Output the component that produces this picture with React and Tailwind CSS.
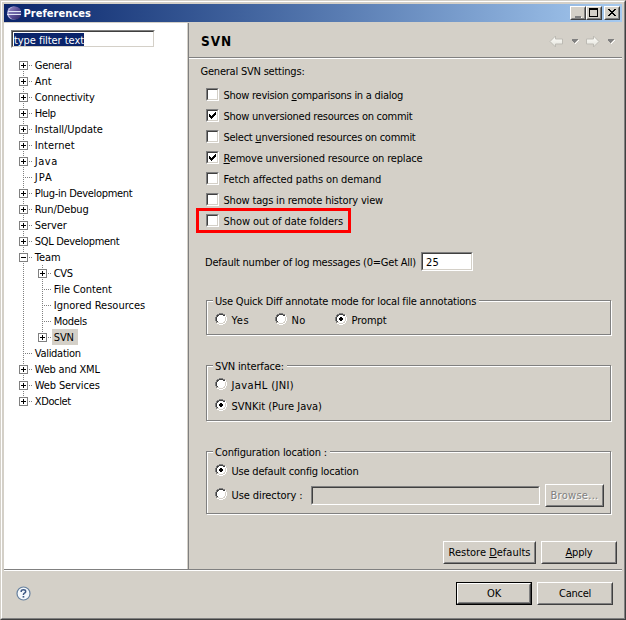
import { useLayoutEffect, useRef } from "react";

/* Text run whose letter spacing is adjusted so that it fills `w` pixels. */
function Label({ w, className = "", children }) {
  const ref = useRef(null);
  useLayoutEffect(() => {
    const el = ref.current;
    el.style.letterSpacing = "0px";
    const natural = el.getBoundingClientRect().width;
    el.style.letterSpacing = (w - natural) / el.textContent.length + "px";
  }, [w]);
  return (
    <span ref={ref} className={"-mb-px inline-block shrink-0 self-start whitespace-pre pt-px leading-4 " + className}>
      {children}
    </span>
  );
}

/* Underlined mnemonic letter */
function Key({ children }) {
  return <span className="underline decoration-1 underline-offset-1">{children}</span>;
}

const tree = [
  ["General", 37, "+"], ["Ant", 17, "+"], ["Connectivity", 60, "+"], ["Help", 21, "+"],
  ["Install/Update", 68, "+"], ["Internet", 40, "+"], ["Java", 23, "+"], ["JPA", 18, ""],
  ["Plug-in Development", 97.5, "+"], ["Run/Debug", 54, "+"], ["Server", 32, "+"],
  ["SQL Development", 84.5, "+"], ["Team", 26, "-"],
  ["CVS", 19, "+", 1], ["File Content", 58, "", 1], ["Ignored Resources", 91.5, "", 1],
  ["Models", 33, "", 1], ["SVN", 20, "+", 1, true],
  ["Validation", 46, ""], ["Web and XML", 65, "+"], ["Web Services", 65, "+"], ["XDoclet", 36, "+"],
];

function Dots({ d }) {
  return <path d={d} stroke="#808080" strokeDasharray="1 1" fill="none" />;
}

function Branch({ mark, first, last }) {
  return (
    <svg width="16" height="16" className="shrink-0" shapeRendering="crispEdges">
      {!first && <Dots d="M5.5 0V8" />}
      {!last && <Dots d="M5.5 8V16" />}
      <Dots d="M7 8.5H14" />
      {mark && (
        <>
          <rect x="1.5" y="4.5" width="8" height="8" fill="#fff" stroke="#808080" />
          <path d={mark === "+" ? "M3 8.5H8M5.5 6V11" : "M3 8.5H8"} stroke="#000" />
        </>
      )}
    </svg>
  );
}

function TreeRow({ item, index }) {
  const [text, w, mark, level, selected] = item;
  return (
    <div className="flex h-4 pl-[14px]">
      {level && (
        <svg width="19" height="16" className="shrink-0" shapeRendering="crispEdges">
          <Dots d="M5.5 0V16" />
        </svg>
      )}
      <Branch mark={mark} first={index === 0} last={index === tree.length - 1 || selected} />
      <span className={selected ? "-ml-px flex bg-[#d4d0c8] pl-[1.75px] pr-[4.25px]" : "flex pl-[0.75px]"}>
        <Label w={w}>{text}</Label>
      </span>
    </div>
  );
}

const sunken =
  "border border-t-[#808080] border-l-[#808080] border-r-white border-b-white";
const sunkenInner =
  "border border-t-[#404040] border-l-[#404040] border-r-[#d4d0c8] border-b-[#d4d0c8]";

function Field({ className, inner = "bg-white", children }) {
  return (
    <div className={"shrink-0 " + sunken + " " + className}>
      <div className={"flex h-full w-full " + sunkenInner + " " + inner}>{children}</div>
    </div>
  );
}

function Check({ w, on, children }) {
  return (
    <div className="flex h-[21px] items-start">
      <Field className="mt-px h-[13px] w-[13px]">
        {on && (
          <svg width="9" height="9" shapeRendering="crispEdges">
            <path
              fill="#000"
              d="M1 3h1v3h-1zM2 4h1v3h-1zM3 5h1v3h-1zM4 4h1v3h-1zM5 3h1v3h-1zM6 2h1v3h-1zM7 1h1v3h-1z"
            />
          </svg>
        )}
      </Field>
      <Label w={w} className="ml-[4.5px]">{children}</Label>
    </div>
  );
}

function Radio({ w, on, className = "", children }) {
  return (
    <div className={"flex items-start " + className}>
      <svg width="12" height="12" className="mt-px shrink-0" shapeRendering="crispEdges">
        <path fill="#fff" d="M4 1h4v1h2v2h1v4h-1v2h-2v1h-4v-1h-2v-2h-1v-4h1v-2h2z" />
        <path fill="#808080" d="M4 0h4v1h-4zM2 1h2v1h-2zM8 1h2v1h-2zM1 2h1v2h-1zM0 4h1v4h-1zM1 8h1v2h-1z" />
        <path fill="#404040" d="M4 1h4v1h-4zM2 2h2v1h-2zM8 2h2v1h-2zM2 3h1v1h-1zM1 4h1v4h-1zM2 8h1v1h-1z" />
        <path fill="#d4d0c8" d="M10 4h1v4h-1zM9 8h1v1h-1zM8 9h2v1h-2zM4 10h4v1h-4zM2 9h2v1h-2z" />
        <path fill="#fff" d="M10 2h1v2h-1zM11 4h1v4h-1zM10 8h1v2h-1zM8 10h2v1h-2zM4 11h4v1h-4zM2 10h2v1h-2z" />
        {on && <path fill="#000" d="M5 4h2v1h1v2h-1v1h-2v-1h-1v-2h1z" />}
      </svg>
      <Label w={w} className="ml-[4.5px]">{children}</Label>
    </div>
  );
}

function Group({ title, w, className, children }) {
  return (
    <fieldset
      className={
        "relative ml-[17px] w-[405px] border border-[#808080] shadow-[inset_1px_1px_0_#fff,1px_1px_0_#fff] " +
        className
      }
    >
      <div className="absolute -top-[8px] left-[6px] flex bg-[#d4d0c8] pl-[2px] pr-[3px]">
        <Label w={w}>{title}</Label>
      </div>
      {children}
    </fieldset>
  );
}

function Button({ className, primary, disabled, w, children }) {
  return (
    <button
      className={
        "flex h-[23px] shrink-0 " + (primary ? "border border-black " : "") + className
      }
    >
      <span className="flex h-full w-full border border-t-white border-l-white border-r-[#404040] border-b-[#404040]">
        <span
          className={
            "flex h-full w-full items-start justify-center border border-transparent border-r-[#808080] border-b-[#808080] " +
            (disabled ? "text-[#808080] [text-shadow:1px_1px_0_#fff]" : "")
          }
        >
          <Label w={w} className={primary ? "" : "mt-px"}>{children}</Label>
        </span>
      </span>
    </button>
  );
}

function CaptionButton({ className = "", children }) {
  return (
    <span
      className={
        "flex h-[14px] w-4 border border-t-white border-l-white border-r-[#404040] border-b-[#404040] " +
        className
      }
    >
      <span className="flex h-full w-full border border-[#d4d0c8] border-r-[#808080] border-b-[#808080] bg-[#d4d0c8]">
        <svg width="12" height="10" shapeRendering="crispEdges">{children}</svg>
      </span>
    </span>
  );
}

function Arrow({ flip }) {
  return (
    <svg width="15" height="13" viewBox="0 0 15 13" className={flip ? "-scale-x-100" : ""}>
      <defs>
        <linearGradient id="arrowFill" x1="0" y1="0" x2="0" y2="1">
          <stop offset="0" stopColor="#fffffb" />
          <stop offset="1" stopColor="#e2e1da" />
        </linearGradient>
      </defs>
      <path d="M1 6.5L6.5 1V4H13.5V9H6.5V12Z" fill="url(#arrowFill)" stroke="#bdbbb4" />
    </svg>
  );
}

function Caret() {
  return (
    <svg width="7" height="5" shapeRendering="crispEdges">
      <path d="M5 1h1v1h-1v1h-1v1h-1v1h1v-1h1v-1h1v-1h1v-1z" fill="#fff" />
      <path d="M0 0h6v1h-1v1h-1v1h-1v1h-1v-1h-1v-1h-1z" fill="#808080" />
    </svg>
  );
}

function EclipseIcon() {
  return (
    <svg width="15" height="15" viewBox="0 0 15 15" className="shrink-0">
      <defs>
        <linearGradient id="globe" x1="0" y1="0" x2="1" y2="1">
          <stop offset="0" stopColor="#9a8fc4" />
          <stop offset="0.5" stopColor="#5b4f97" />
          <stop offset="1" stopColor="#2c2564" />
        </linearGradient>
      </defs>
      <ellipse cx="6.3" cy="7" rx="6.2" ry="6.6" fill="#b9b3e0" />
      <ellipse cx="8" cy="7" rx="6.4" ry="6.6" fill="url(#globe)" />
      <path d="M1 5.5H14M0 8.5H14" stroke="#dfe5f5" />
      <path d="M2 7H14" stroke="#7f7cb5" />
    </svg>
  );
}

export default function App() {
  return (
    <div className="h-[620px] w-[626px] overflow-hidden border border-t-[#d4d0c8] border-l-[#d4d0c8] border-r-[#404040] border-b-[#404040] bg-[#d4d0c8] font-['DejaVu_Sans_Condensed','DejaVu_Sans',sans-serif] text-[11px] text-black">
      <div className="flex h-full w-full flex-col border border-t-white border-l-white border-r-[#808080] border-b-[#808080] p-[2px]">
        <header className="flex h-[18px] shrink-0 items-center bg-linear-to-r from-[#0a246a] to-[#a6caf0] pl-[3px] pr-[2px]">
          <EclipseIcon />
          <Label w={67.5} className="ml-[1.5px] mt-px font-bold text-white">Preferences</Label>
          <CaptionButton className="ml-auto">
            <path d="M3 8h6v2h-6z" fill="#808080" />
            <path d="M3 9h6v1h1v-1h-1z" fill="#fff" />
          </CaptionButton>
          <CaptionButton>
            <path d="M1 0h9v9h-9zM2 2v6h7v-6z" fill="#000" fillRule="evenodd" />
          </CaptionButton>
          <CaptionButton className="ml-[2px]">
            <path
              d="M2 1h2v1h1v1h2v-1h1v-1h2v1h-1v1h-1v1h-1v1h1v1h1v1h1v1h-2v-1h-1v-1h-2v1h-1v1h-2v-1h1v-1h1v-1h1v-1h-1v-1h-1v-1h-1z"
              fill="#000"
            />
          </CaptionButton>
        </header>

        <div className="mt-px flex h-[546px] shrink-0">
          <nav className="w-[183px] shrink-0 bg-white">
            <div className="pl-[7px] pt-[7px]">
              <Field className="h-[18px] w-[144px]">
                <span className="ml-px mt-px flex h-[13px] bg-[#0a246a] text-white">
                  <Label w={70} className="-mt-px">type filter text</Label>
                </span>
              </Field>
            </div>
            <div className="pt-[9px]">
              {tree.map((item, i) => (
                <TreeRow key={item[0]} item={item} index={i} />
              ))}
            </div>
          </nav>
          <div className="ml-px w-px bg-[#808080]" />

          <main className="flex min-w-0 flex-1 flex-col">
            <div className="flex h-[35px] shrink-0 items-center border-b border-[#808080] shadow-[0_1px_0_#fff]">
              <Label w={31} className="ml-3 mt-[9px] text-[13.5px] font-bold">SVN</Label>
              <div className="ml-auto mr-[7px] flex items-center pt-[2px]">
                <Arrow />
                <span className="ml-2 mr-1.5"><Caret /></span>
                <Arrow flip />
                <span className="ml-2"><Caret /></span>
              </div>
            </div>

            <Label w={104} className="ml-[11.5px] mt-[5px]">General SVN settings:</Label>

            <section className="mt-[8px] pl-[17px]">
              <Check w={179.5}>Show revision <Key>c</Key>omparisons in a dialog</Check>
              <Check w={189} on>Show unversioned resources on commit</Check>
              <Check w={192}>Select <Key>u</Key>nversioned resources on commit</Check>
              <Check w={199} on><Key>R</Key>emove unversioned resource on replace</Check>
              <Check w={157.5}>Fetch affected paths on demand</Check>
              <Check w={159.5}>Show tags in remote history view</Check>
              <div className="-ml-[10px] -mt-[5px] h-[25px] w-[155px] border-[3px] border-[#f00] pl-[7px] pt-[2px]">
                <Check w={119.5}>Show out of date folders</Check>
              </div>
            </section>

            <div className="mt-[19px] flex h-[19px] items-center pl-4">
              <Label w={211} className="mt-[2px]">Default number of log messages (0=Get All)</Label>
              <Field className="ml-[5px] h-[19px] w-[52px]">
                <Label w={13} className="ml-[3px]">25</Label>
              </Field>
            </div>

            <Group title="Use Quick Diff annotate mode for local file annotations" w={261} className="mt-[29px] h-[35px]">
              <div className="flex pl-2 pt-[11px]">
                <Radio w={18} className="w-[60px]">Yes</Radio>
                <Radio w={14} className="w-[60px]">No</Radio>
                <Radio w={35} on>Prompt</Radio>
              </div>
            </Group>

            <Group title="SVN interface:" w={69} className="mt-[30px] h-[56px]">
              <div className="pl-2 pt-[11px]">
                <Radio w={62.5} className="h-[21px]">JavaHL (JNI)</Radio>
                <Radio w={90.5} on>SVNKit (Pure Java)</Radio>
              </div>
            </Group>

            <Group title="Configuration location :" w={112} className="mt-[30px] h-[63px]">
              <div className="h-[27px] pl-2 pt-[11px]">
                <Radio w={127} on>Use default config location</Radio>
              </div>
              <div className="mt-[5px] flex items-start pl-2">
                <Radio w={71} className="mt-[3px] w-24">Use directory :</Radio>
                <Field className="mt-[2px] h-[19px] w-[229px]" inner="bg-[#d4d0c8]" />
                <Button w={48} disabled className="ml-[5px] w-[59px]">Browse...</Button>
              </div>
            </Group>

            <div className="mt-[27px] flex gap-[5px] pl-[254px]">
              <Button w={82} className="w-[93px]">Restore <Key>D</Key>efaults</Button>
              <Button w={27} className="w-[76px]"><Key>A</Key>pply</Button>
            </div>
          </main>
        </div>

        <footer className="flex flex-1 items-start border-t border-[#808080] shadow-[inset_0_1px_0_#fff]">
          <svg width="15" height="15" viewBox="0 0 15 15" className="ml-3 mt-[15.5px] shrink-0">
            <circle cx="7.5" cy="7.5" r="6.5" fill="#f4f8fc" stroke="#66809f" strokeWidth="1.2" />
            <path d="M5.2 6V5.4Q5.2 3.7 7.4 3.7Q9.7 3.7 9.7 5.4Q9.7 6.5 8.4 7.1Q7.4 7.6 7.4 8.9" fill="none" stroke="#3d5884" strokeWidth="1.5" />
            <path d="M6.6 10h1.7v1.6h-1.7z" fill="#3d5884" />
          </svg>
          <Button w={14} primary className="ml-auto mt-3 w-[76px]">OK</Button>
          <Button w={32} className="ml-[5px] mr-[9px] mt-3 w-[76px]">Cancel</Button>
        </footer>
      </div>
    </div>
  );
}
